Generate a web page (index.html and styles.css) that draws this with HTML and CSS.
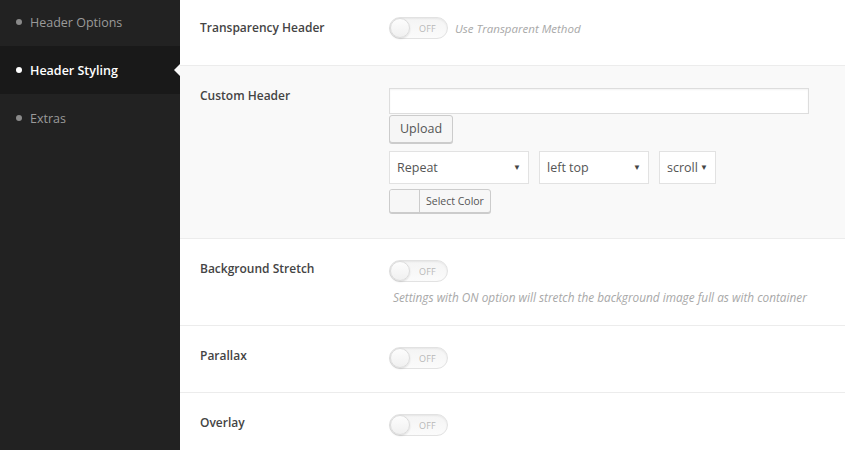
FILE: index.html
```html
<!DOCTYPE html>
<html>
<head>
<meta charset="utf-8">
<link rel="stylesheet" href="styles.css">
</head>
<body>
<div class="layout">
  <nav class="sidebar">
    <ul class="menu">
      <li class="item"><span class="dot"></span>Header Options</li>
      <li class="item active"><span class="dot"></span>Header Styling<span class="pointer"></span></li>
      <li class="item"><span class="dot"></span>Extras</li>
    </ul>
  </nav>
  <main class="content">
    <section class="row row-first">
      <div class="label">Transparency Header</div>
      <div class="control inline">
        <span class="toggle"><span class="knob"></span><span class="off">OFF</span></span>
        <span class="desc">Use Transparent Method</span>
      </div>
    </section>
    <section class="row row-grey">
      <div class="label">Custom Header</div>
      <div class="control">
        <div class="text-input"></div>
        <div class="btn-upload">Upload</div>
        <div class="selects">
          <div class="select w-repeat">Repeat<span class="caret">▼</span></div>
          <div class="select w-pos">left top<span class="caret">▼</span></div>
          <div class="select w-scroll">scroll<span class="caret">▼</span></div>
        </div>
        <div class="color-btn"><span class="swatch"></span><span class="color-text">Select Color</span></div>
      </div>
    </section>
    <section class="row row-stretch">
      <div class="label">Background Stretch</div>
      <div class="control">
        <span class="toggle"><span class="knob"></span><span class="off">OFF</span></span>
        <div class="desc block">Settings with ON option will stretch the background image full as with container</div>
      </div>
    </section>
    <section class="row">
      <div class="label">Parallax</div>
      <div class="control">
        <span class="toggle"><span class="knob"></span><span class="off">OFF</span></span>
      </div>
    </section>
    <section class="row">
      <div class="label">Overlay</div>
      <div class="control">
        <span class="toggle"><span class="knob"></span><span class="off">OFF</span></span>
      </div>
    </section>
  </main>
</div>
</body>
</html>
```

FILE: styles.css
```css
* { box-sizing: border-box; }
html, body { margin: 0; padding: 0; }
body {
  width: 845px;
  height: 450px;
  overflow: hidden;
  font-family: "Open Sans", "Noto Sans", sans-serif;
  background: #fff;
}
.layout {
  display: flex;
  height: 450px;
}
.sidebar {
  width: 180px;
  flex: 0 0 180px;
  background: #222222;
}
.menu {
  list-style: none;
  margin: -2px 0 0;
  padding: 0;
}
.item {
  position: relative;
  display: flex;
  align-items: center;
  height: 48px;
  padding-left: 16px;
  font-size: 12.5px;
  color: #9a9a9a;
}
.item .dot {
  width: 6px;
  height: 6px;
  border-radius: 50%;
  background: #8a8a8a;
  margin-right: 8px;
}
.item.active {
  background: #191919;
  color: #fff;
  font-weight: 600;
}
.item.active .dot { background: #fff; }
.pointer {
  position: absolute;
  right: 0;
  top: 18px;
  width: 0;
  height: 0;
  border-top: 6px solid transparent;
  border-bottom: 6px solid transparent;
  border-right: 6px solid #f9f9f9;
}
.content {
  flex: 1;
  margin-top: -4px;
}
.row {
  display: flex;
  align-items: flex-start;
  padding: 21px 0 23px 20px;
  border-bottom: 1px solid #ececec;
}
.row-first { padding-top: 21px; padding-bottom: 26px; }
.row-grey { background: #f9f9f9; padding-top: 22px; padding-bottom: 25px; }
.row-stretch { padding-top: 21px; padding-bottom: 20px; }
.label {
  width: 189px;
  flex: 0 0 189px;
  font-size: 12px;
  line-height: 17px;
  font-weight: 600;
  color: #444;
  padding-top: 0;
}
.row-first .label { padding-top: 2px; }
.row-grey .label { margin-top: -1px; }
.control {
  flex: 1;
  display: flex;
  flex-direction: column;
  align-items: flex-start;
}
.control.inline { flex-direction: row; align-items: center; }
.toggle {
  position: relative;
  display: flex;
  align-items: center;
  width: 59px;
  height: 22px;
  border: 1px solid #e2e2e2;
  border-radius: 12px;
  background: linear-gradient(#f4f4f4, #fbfbfb);
  box-shadow: inset 0 1px 2px rgba(0,0,0,0.06);
}
.knob {
  width: 20px;
  height: 20px;
  border-radius: 50%;
  background: linear-gradient(#fdfdfd, #f0f0f0);
  border: 1px solid #dcdcdc;
  box-shadow: 0 1px 2px rgba(0,0,0,0.12);
}
.off {
  font-size: 9px;
  color: #b8b8b8;
  margin-left: 9px;
  letter-spacing: 0.2px;
}
.desc {
  font-size: 11.5px;
  line-height: 15px;
  font-style: italic;
  color: #a8a8a8;
  margin-left: 7px;
}
.desc.block {
  font-size: 11.8px;
  margin: 8px 0 0 4px;
}
.text-input {
  width: 420px;
  height: 26px;
  background: #fff;
  border: 1px solid #ddd;
  box-shadow: inset 0 1px 2px rgba(0,0,0,0.05);
}
.btn-upload {
  margin-top: 1px;
  height: 28px;
  line-height: 26px;
  padding: 0 10px;
  border: 1px solid #ccc;
  border-radius: 3px;
  background: #f6f6f6;
  box-shadow: 0 1px 0 #ccc;
  font-size: 12.5px;
  color: #555;
}
.selects {
  display: flex;
  gap: 10px;
  margin-top: 8px;
}
.select {
  position: relative;
  height: 33px;
  line-height: 31px;
  padding-left: 7px;
  background: #fff;
  border: 1px solid #e2e2e2;
  font-size: 12.5px;
  color: #555;
}
.w-repeat { width: 140px; }
.w-pos { width: 110px; }
.w-scroll { width: 57px; }
.caret {
  position: absolute;
  right: 7px;
  top: -1px;
  font-size: 8px;
  color: #444;
}
.color-btn {
  display: flex;
  margin-top: 5px;
  height: 24px;
  border: 1px solid #ccc;
  border-radius: 3px;
  background: #f7f7f7;
  box-shadow: 0 1px 0 #ccc;
  overflow: hidden;
}
.swatch {
  width: 30px;
  border-right: 1px solid #ccc;
  background: #f7f7f7;
}
.color-text {
  font-size: 10.5px;
  color: #555;
  line-height: 22px;
  padding: 0 6px;
}
```
